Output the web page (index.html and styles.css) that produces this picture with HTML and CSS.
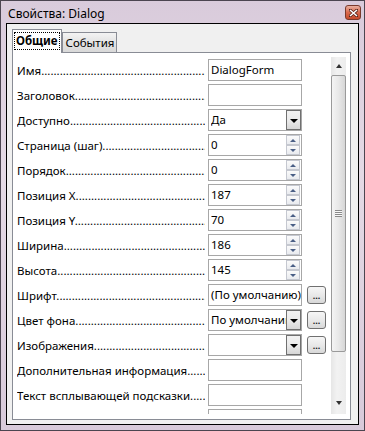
FILE: index.html
```html
<!DOCTYPE html>
<html lang="ru">

<head>
  <meta charset="UTF-8">
  <title>Свойства: Dialog</title>
  <link rel="stylesheet" href="styles.css">
</head>

<body>
  <div class="window">

    <!-- Title bar -->
    <div class="titlebar">
      <span class="title">Свойства: Dialog</span>
      <span class="close">
        <svg width="9" height="8" viewBox="0 0 9 8">
          <path d="M1 1 L8 7 M8 1 L1 7" stroke="#5a2418" stroke-width="3" stroke-linecap="square"/>
          <path d="M1 1 L8 7 M8 1 L1 7" stroke="#fff" stroke-width="1.6"/>
        </svg>
      </span>
    </div>

    <div class="client">
      <!-- Tabs -->
      <div class="tabs">
        <div class="tab active"><span class="focus">Общие</span></div>
        <div class="tab">События</div>
      </div>

      <!-- Property list -->
      <div class="panel">
        <div class="scroll">
          <div class="rows">
            <div class="row">
              <span class="label">Имя</span>
              <div class="field">DialogForm</div>
            </div>
            <div class="row">
              <span class="label">Заголовок</span>
              <div class="field"></div>
            </div>
            <div class="row">
              <span class="label">Доступно</span>
              <div class="field combo"><span class="value">Да</span><span class="drop"></span></div>
            </div>
            <div class="row">
              <span class="label">Страница (шаг)</span>
              <div class="field spin"><span class="value">0</span><span class="arrows"><span class="up"></span><span class="down"></span></span></div>
            </div>
            <div class="row">
              <span class="label">Порядок</span>
              <div class="field spin"><span class="value">0</span><span class="arrows"><span class="up"></span><span class="down"></span></span></div>
            </div>
            <div class="row">
              <span class="label">Позиция X</span>
              <div class="field spin"><span class="value">187</span><span class="arrows"><span class="up"></span><span class="down"></span></span></div>
            </div>
            <div class="row">
              <span class="label">Позиция Y</span>
              <div class="field spin"><span class="value">70</span><span class="arrows"><span class="up"></span><span class="down"></span></span></div>
            </div>
            <div class="row">
              <span class="label">Ширина</span>
              <div class="field spin"><span class="value">186</span><span class="arrows"><span class="up"></span><span class="down"></span></span></div>
            </div>
            <div class="row">
              <span class="label">Высота</span>
              <div class="field spin"><span class="value">145</span><span class="arrows"><span class="up"></span><span class="down"></span></span></div>
            </div>
            <div class="row">
              <span class="label">Шрифт</span>
              <div class="field">(По умолчанию)</div>
              <span class="more">...</span>
            </div>
            <div class="row">
              <span class="label">Цвет фона</span>
              <div class="field combo"><span class="value">По умолчанию</span><span class="drop"></span></div>
              <span class="more">...</span>
            </div>
            <div class="row">
              <span class="label">Изображения</span>
              <div class="field combo"><span class="value"></span><span class="drop"></span></div>
              <span class="more">...</span>
            </div>
            <div class="row">
              <span class="label">Дополнительная информация</span>
              <div class="field"></div>
            </div>
            <div class="row">
              <span class="label">Текст всплывающей подсказки</span>
              <div class="field"></div>
            </div>
            <div class="row">
              <span class="label blank"></span>
              <div class="field"></div>
            </div>
          </div>

          <!-- Scrollbar -->
          <div class="scrollbar">
            <span class="arrow-up"></span>
            <div class="thumb"><span class="grip"></span></div>
            <span class="arrow-down"></span>
          </div>
        </div>
      </div>
    </div>
  </div>
</body>

</html>
```

FILE: styles.css
```css
body {
  margin: 0;
  font-family: "Noto Sans", sans-serif;
  font-size: 11.5px;
  color: #000;
}

.window {
  width: 365px;
  height: 431px;
  box-sizing: border-box;
  border: 1px solid #4b4550;
  padding: 0 5px 5px 5px;
  background: linear-gradient(to bottom, #d9cbdb, #e4dae5 40%, #d8cada);
  display: flex;
  flex-direction: column;
}

.titlebar {
  height: 22px;
  flex-shrink: 0;
  display: flex;
  align-items: center;
  justify-content: space-between;
}

.title {
  margin-left: 2px;
  margin-top: 3px;
  font-size: 12px;
}

.close {
  width: 16px;
  height: 15px;
  margin-right: -2px;
  margin-top: 1px;
  box-sizing: border-box;
  border: 1px solid #7a3a2c;
  border-radius: 3px;
  background: linear-gradient(to bottom, #eab0a0, #d9694c 50%, #c44a2b);
  display: flex;
  align-items: center;
  justify-content: center;
}

.client {
  flex: 1;
  min-height: 0;
  border: 1px solid #000;
  background: #f0f0f0;
  padding: 5px 7px 4px 5px;
  display: flex;
  flex-direction: column;
}

.tabs {
  height: 23px;
  flex-shrink: 0;
  display: flex;
  align-items: flex-end;
  position: relative;
  z-index: 1;
}

.tab {
  height: 20px;
  box-sizing: border-box;
  border: 1px solid #898c95;
  border-bottom: none;
  padding: 2px 2px 0 3px;
  font-size: 11.5px;
  background: linear-gradient(to bottom, #f3f3f3, #e3e3e3 50%, #d9d9d9);
}

.tab.active {
  height: 24px;
  margin-bottom: -1px;
  padding: 2px 1px 0 1px;
  background: #fff;
  font-weight: bold;
}

.focus {
  display: block;
  border: 1px dotted #000;
  padding: 0 1px;
  line-height: 16px;
}

.panel {
  flex: 1;
  min-height: 0;
  border: 1px solid #898c95;
  background: #fff;
  padding: 4px 4px 5px 4px;
  display: flex;
}

.scroll {
  flex: 1;
  display: flex;
  overflow: hidden;
}

.rows {
  flex: 1;
  padding-top: 2px;
  overflow: hidden;
}

.row {
  height: 22px;
  margin-bottom: 3px;
  display: flex;
  align-items: center;
}

.label {
  width: 188px;
  margin-right: 3px;
  white-space: nowrap;
  overflow: hidden;
}

.label::after {
  content: "..............................................................................";
}

.label.blank::after {
  content: "";
}

.field {
  width: 94px;
  height: 22px;
  flex-shrink: 0;
  box-sizing: border-box;
  border: 1px solid #a7a7a7;
  padding-left: 2px;
  line-height: 20px;
  white-space: nowrap;
  overflow: hidden;
  display: flex;
  align-items: center;
}

.field .value {
  flex: 1;
  overflow: hidden;
  white-space: nowrap;
}

.drop {
  width: 15px;
  height: 20px;
  flex-shrink: 0;
  box-sizing: border-box;
  border: 1px solid #707070;
  background: linear-gradient(to bottom, #f2f2f2, #ebebeb 50%, #d6d6d6);
  display: flex;
  align-items: center;
  justify-content: center;
}

.drop::after {
  content: "";
  border-left: 4px solid transparent;
  border-right: 4px solid transparent;
  border-top: 4px solid #000;
  margin-top: 1px;
}

.arrows {
  width: 14px;
  height: 20px;
  margin-right: 1px;
  display: flex;
  flex-direction: column;
}

.arrows .up,
.arrows .down {
  flex: 1;
  box-sizing: border-box;
  border: 1px solid #c5c8d0;
  background: linear-gradient(to bottom, #fbfbfb, #e9ebef);
  display: flex;
  align-items: center;
  justify-content: center;
}

.arrows .up::after {
  content: "";
  border-left: 3px solid transparent;
  border-right: 3px solid transparent;
  border-bottom: 3px solid #4a5f86;
}

.arrows .down::after {
  content: "";
  border-left: 3px solid transparent;
  border-right: 3px solid transparent;
  border-top: 3px solid #4a5f86;
}

.more {
  width: 19px;
  height: 18px;
  margin-left: 5px;
  box-sizing: border-box;
  border: 1px solid #707070;
  border-radius: 3px;
  background: linear-gradient(to bottom, #f6f6f6, #e9e9e9 50%, #d8d8d8);
  font-size: 9px;
  font-weight: bold;
  line-height: 18px;
  text-align: center;
  color: #1a1a1a;
}

.scrollbar {
  width: 15px;
  background: linear-gradient(to right, #e6e6e6, #f2f2f2 40%, #ececec);
  display: flex;
  flex-direction: column;
  align-items: center;
}

.arrow-up,
.arrow-down {
  height: 18px;
  flex-shrink: 0;
  display: flex;
  align-items: center;
  justify-content: center;
}

.arrow-up::after {
  content: "";
  border-left: 3px solid transparent;
  border-right: 3px solid transparent;
  border-bottom: 4px solid #333;
}

.arrow-down::after {
  content: "";
  border-left: 3px solid transparent;
  border-right: 3px solid transparent;
  border-top: 4px solid #333;
}

.thumb {
  width: 15px;
  height: 277px;
  flex-shrink: 0;
  box-sizing: border-box;
  border: 1px solid #9a9a9a;
  border-radius: 2px;
  background: linear-gradient(to right, #f4f4f4, #e8e8e8 50%, #d6d6d6);
  display: flex;
  align-items: center;
  justify-content: center;
}

.grip {
  width: 7px;
  height: 7px;
  background: repeating-linear-gradient(to bottom, #8a8a8a 0 1px, #f8f8f8 1px 2px);
}

.arrow-down {
  margin-top: auto;
  margin-bottom: 2px;
}
```
